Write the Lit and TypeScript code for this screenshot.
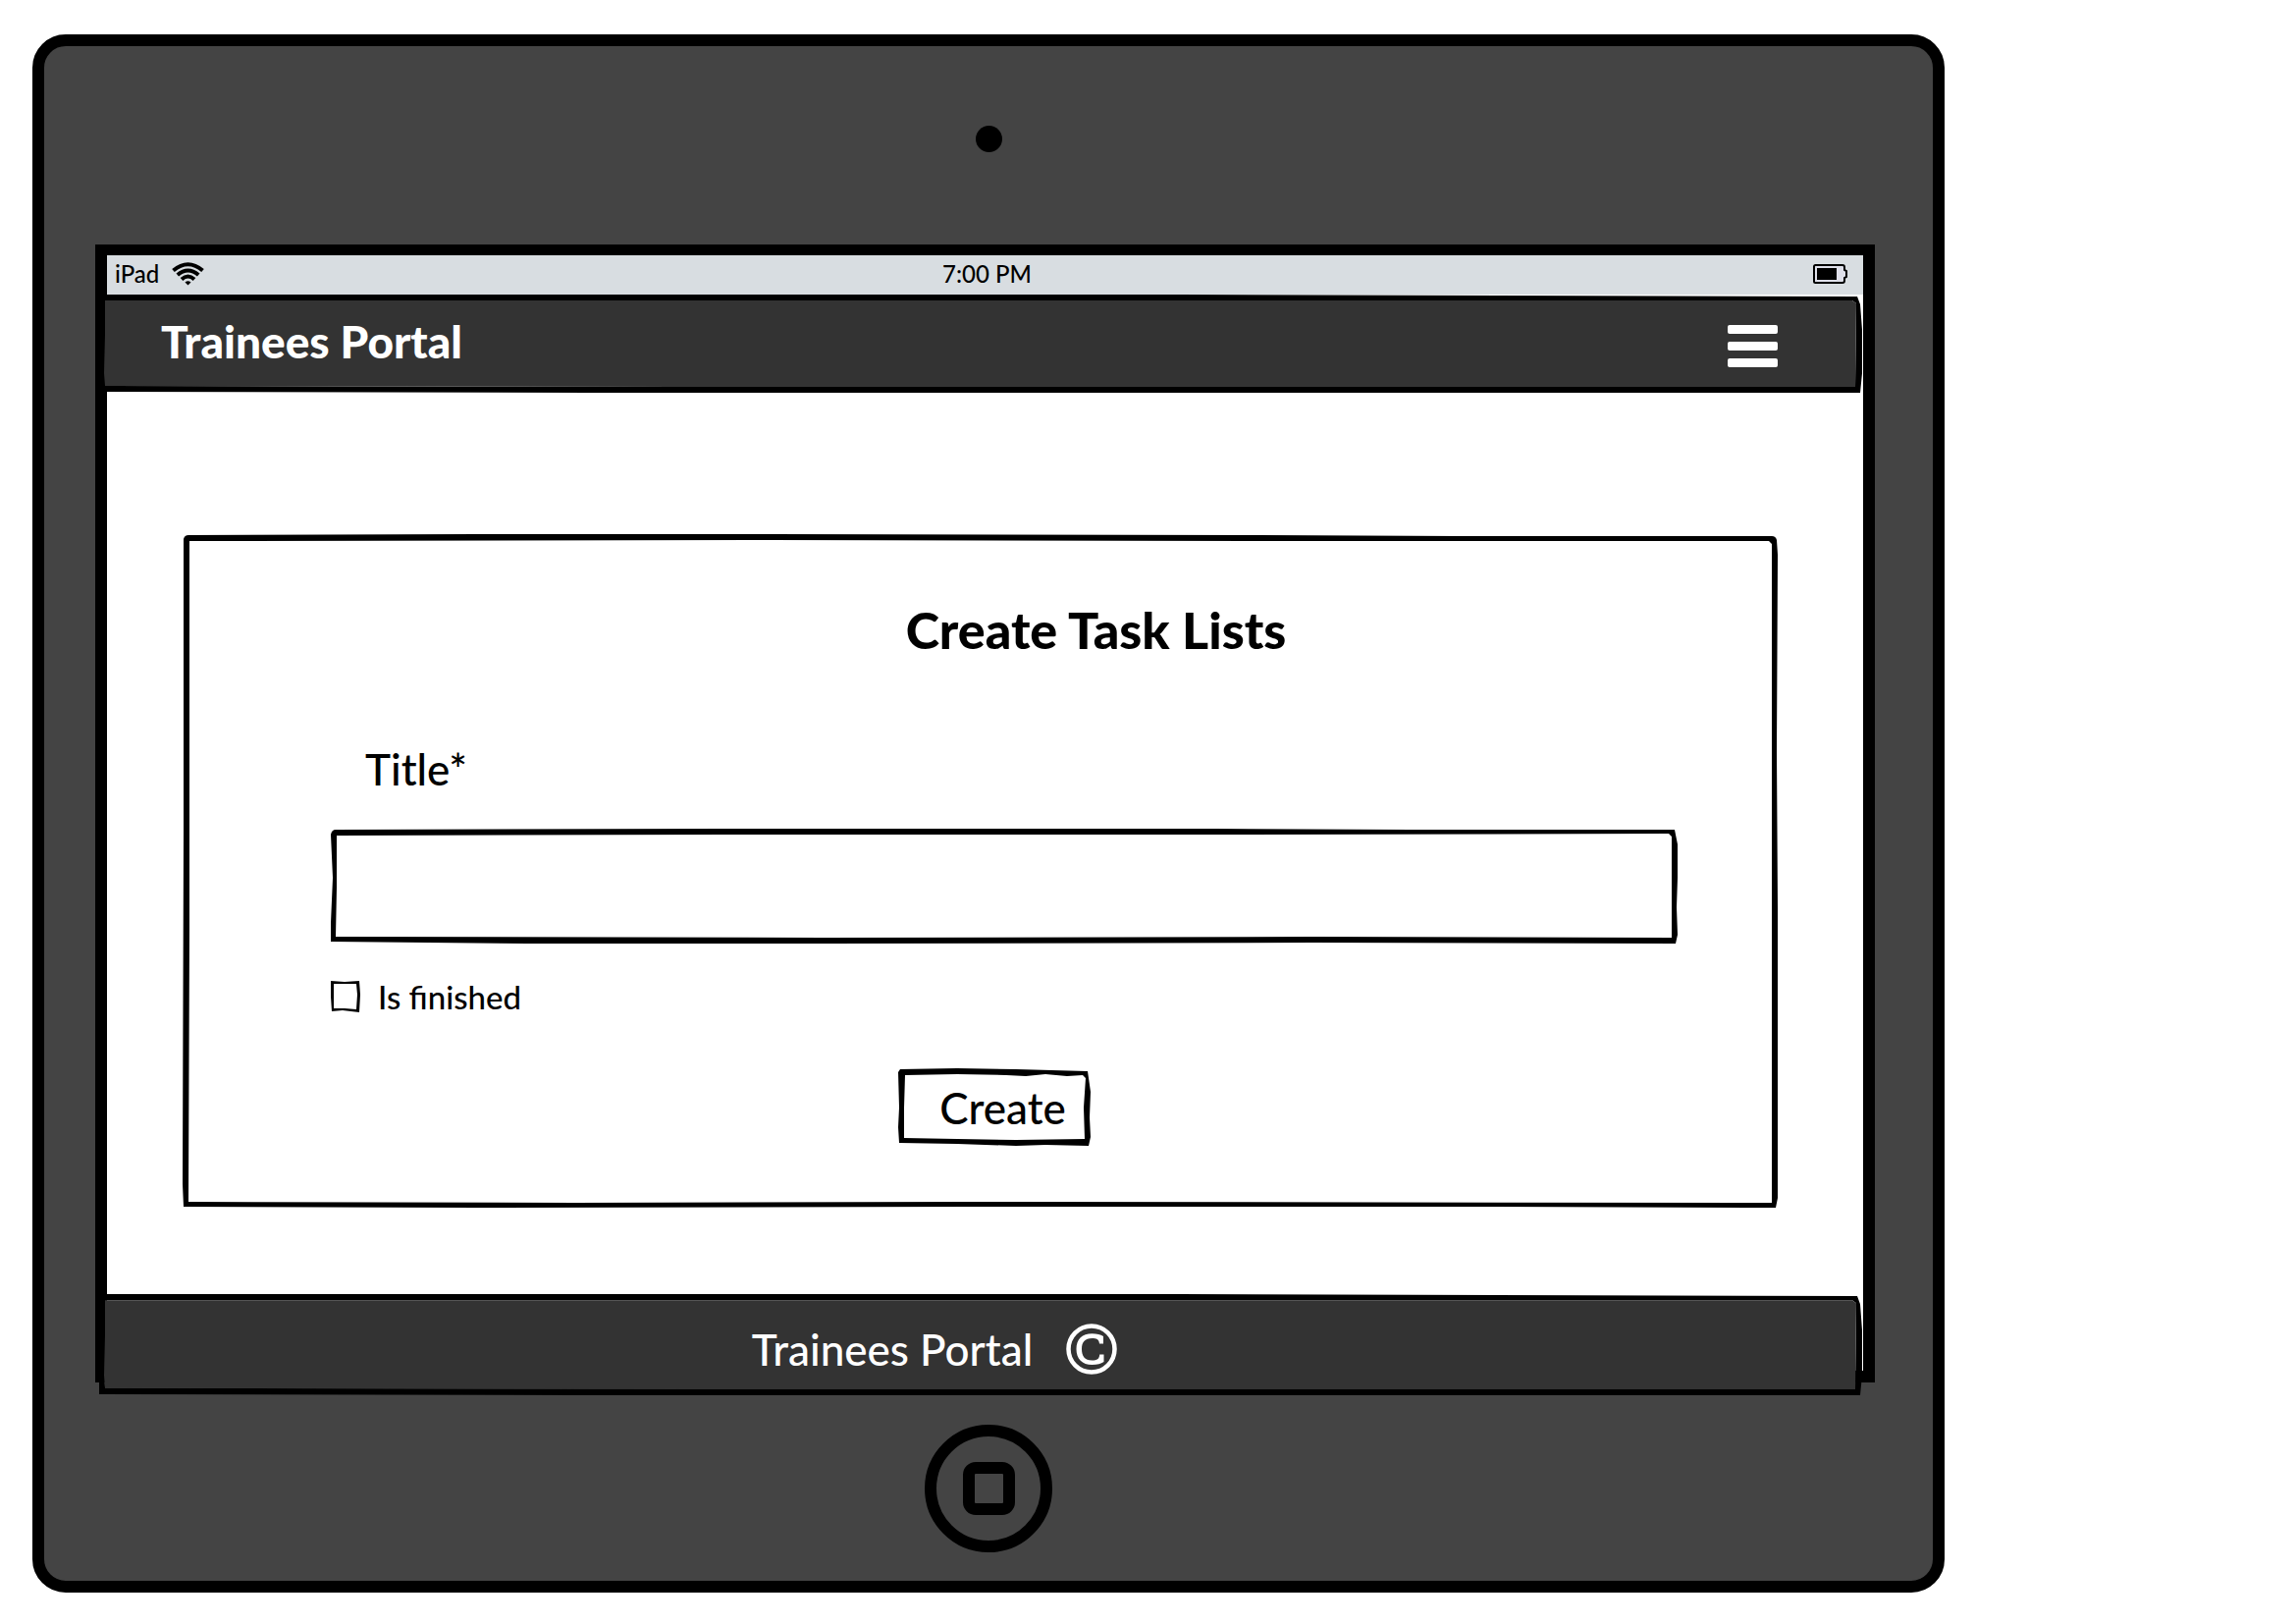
import { LitElement, html, css, svg } from "lit";
import { customElement, property } from "lit/decorators.js";

type Sketch = { w: number; h: number; outer: string; inner: string };

const SKETCHES: Record<string, Sketch> = {
  card: {
    w: 1625,
    h: 684,
    outer:
      "M1 4 Q2 0 6 0 L300 -1 L600 -1 L1100 0 L1300 1 L1619 1 Q1623 1 1624 5 L1625 20 L1624 220 L1625 380 L1625 674 L1623 684 L1300 683 L800 683 L300 684 L1 683 L0 660 L1 300 Z",
    inner:
      "M7 6 L600 5 L1100 6 L1616 6 L1619 9 L1619 300 L1619 400 L1619 679 L800 678 L400 679 L6 678 L7 400 Z",
  },
  field: {
    w: 1372,
    h: 117,
    outer:
      "M0 6 Q1 1 5 1 L400 0 L900 0 L1100 1 L1369 1 L1372 16 L1372 50 L1371 80 L1372 108 L1370 117 L1000 116 L500 117 L200 117 L0 115 L0 96 L2 50 Z",
    inner:
      "M6 7 L400 6 L900 6 L1363 5 L1366 8 L1366 111 L1000 110 L500 111 L5 110 L6 60 Z",
  },
  button: {
    w: 196,
    h: 79,
    outer:
      "M0 4 L2 1 L60 0 L120 1 L193 3 L196 24 L195 50 L196 70 L194 79 L150 78 L120 79 L60 77 L1 76 L0 60 L1 40 Z",
    inner:
      "M7 7 L60 6 L110 7 L130 8 L150 6 L172 8 L188 7 L191 10 L189 40 L190 72 L120 73 L60 72 L6 71 L6 40 Z",
  },
  box: {
    w: 30,
    h: 32,
    outer: "M0 0 L14 1 L29 0 L30 14 L29 32 L12 30 L1 31 L0 16 Z",
    inner: "M3 3 L14 3 L26 3 L27 14 L26 29 L14 28 L3 28 L3 14 Z",
  },
  bar: {
    w: 1796,
    h: 100,
    outer:
      "M0 4 L2 0 L500 0 L1100 0 L1791 2 L1794 10 L1796 36 L1796 80 L1794 100 L1786 100 L1200 100 L500 100 L0 99 Z",
    inner:
      "M6 6 L900 6 L1786 6 L1790 9 L1789 94 L1200 94 L600 94 L6 93 L5 80 L6 40 Z",
  },
};

@customElement("sketch-frame")
export class SketchFrame extends LitElement {
  @property() kind = "card";

  static styles = css`
    :host {
      position: absolute;
      inset: 0;
      display: block;
      pointer-events: none;
    }
    .drawing {
      display: block;
      width: 100%;
      height: 100%;
      overflow: visible;
    }
    .ink {
      fill: #000;
      fill-rule: evenodd;
    }
    .fill {
      fill: #333;
    }
  `;

  render() {
    const s = SKETCHES[this.kind];
    return html`<svg
      class="drawing"
      viewBox="0 0 ${s.w} ${s.h}"
      preserveAspectRatio="none"
      aria-hidden="true"
    >
      <path class="ink" d="${s.outer} ${s.inner}"></path>
      ${this.kind === "bar" ? svg`<path class="fill" d=${s.inner}></path>` : null}
    </svg>`;
  }
}

@customElement("app-root")
export class AppRoot extends LitElement {
  static styles = css`
    :host {
      display: block;
      background: #fff;
      color: #000;
      font-family: Lato, "Open Sans", sans-serif;
      font-weight: 500;
    }
    * {
      box-sizing: border-box;
    }
    .page {
      padding: 35px 358px 33px 33px;
    }
    .tablet {
      display: flex;
      flex-direction: column;
      background: #444;
      border: 12px solid #000;
      border-radius: 34px;
    }
    .camera {
      align-self: center;
      width: 27px;
      height: 27px;
      margin: 81px 0 94px;
      border-radius: 50%;
      background: #000;
    }
    .screen {
      margin: 0 59px 0 52px;
      border: 12px solid #000;
      border-top-width: 11px;
      background: #fff;
      display: flex;
      flex-direction: column;
    }
    .status {
      display: grid;
      grid-template-columns: 1fr auto 1fr;
      align-items: center;
      height: 40px;
      padding: 0 16px 2px 8px;
      background: #d8dde1;
      font-size: 24px;
      line-height: 32px;
    }
    .carrier {
      display: flex;
      align-items: center;
      gap: 13px;
    }
    .wifi {
      width: 33px;
      height: 24px;
    }
    .time {
      padding-left: 12px;
    }
    .battery {
      justify-self: end;
      width: 35px;
      height: 20px;
    }
    .bar {
      position: relative;
      display: flex;
      align-items: center;
      margin: 0 1px 0 -8px;
      color: #fff;
    }
    .bar > :not(sketch-frame) {
      position: relative;
    }
    .top {
      height: 100px;
      padding: 0 86px 0 63px;
      justify-content: space-between;
    }
    .brand {
      margin: 0;
      font-size: 46px;
      line-height: 60px;
      font-weight: 900;
      padding-bottom: 4px;
    }
    .menu {
      display: flex;
      flex-direction: column;
      gap: 8px;
      padding: 4px 0 0;
      border: 0;
      background: none;
      cursor: pointer;
    }
    .line {
      width: 51px;
      height: 9px;
      border-radius: 2px;
      background: #fff;
    }
    .card {
      position: relative;
      display: flex;
      flex-direction: column;
      margin: 145px 87px 88px 77px;
      padding: 66px 102px 63px 151px;
    }
    .heading {
      margin: 0 0 84px;
      padding-left: 187px;
      text-align: center;
      font-size: 52px;
      line-height: 60px;
      font-weight: 900;
    }
    .label {
      margin: 0 0 33px 35px;
      font-size: 44px;
      line-height: 56px;
    }
    .field {
      position: relative;
      display: flex;
      height: 117px;
    }
    .input {
      flex: 1;
      min-width: 0;
      padding: 0 24px;
      border: 0;
      background: none;
      font: inherit;
      font-size: 44px;
    }
    .check {
      display: flex;
      align-items: center;
      align-self: start;
      gap: 18px;
      height: 40px;
      margin: 34px 0 53px;
      font-size: 33px;
      line-height: 40px;
    }
    .box {
      position: relative;
      display: flex;
      width: 30px;
      height: 32px;
    }
    .tick {
      appearance: none;
      width: 100%;
      height: 100%;
      margin: 0;
    }
    .tick:checked {
      background: linear-gradient(#000, #000) center / 14px 14px no-repeat;
    }
    .create {
      position: relative;
      align-self: center;
      width: 196px;
      height: 79px;
      margin-right: 20px;
      padding: 0 0 0 17px;
      border: 0;
      background: none;
      color: inherit;
      font: inherit;
      font-size: 44px;
      line-height: 56px;
      cursor: pointer;
    }
    .bottom {
      height: 103px;
      margin-bottom: -25px;
      padding: 8px 94px 0 0;
      justify-content: center;
      gap: 34px;
      font-size: 44px;
      line-height: 56px;
    }
    .copyright {
      width: 52px;
      height: 52px;
    }
    .home {
      display: grid;
      place-items: center;
      align-self: center;
      width: 130px;
      height: 130px;
      margin: 43px 0 29px;
      padding: 0;
      border: 12px solid #000;
      border-radius: 50%;
      background: none;
      cursor: pointer;
    }
    .square {
      width: 53px;
      height: 54px;
      border: 12px solid #000;
      border-radius: 13px;
    }
  `;

  private create(event: Event) {
    event.preventDefault();
  }

  render() {
    return html`
      <div class="page">
        <div class="tablet">
          <div class="camera"></div>
          <div class="screen">
            <div class="status">
              <span class="carrier">
                iPad
                <svg class="wifi" viewBox="0 0 33 24" aria-hidden="true">
                  <g fill="none" stroke="#000" stroke-width="4">
                    <path d="M1.5 8.5 Q16.5 -4 31.5 8.5"></path>
                    <path d="M5.8 13 Q16.5 4 27.2 13"></path>
                    <path d="M10 17.5 Q16.5 11.5 23 17.5"></path>
                  </g>
                  <path d="M13.5 20.5 Q16.5 18 19.5 20.5 L16.5 23.5 Z"></path>
                </svg>
              </span>
              <span class="time">7:00 PM</span>
              <svg class="battery" viewBox="0 0 35 20" aria-hidden="true">
                <path
                  d="M2.5 1 H30 Q32 1 32 3 V6 L34 7 V13 L32 14 V17 Q32 19 30 19 H2.5 Q1 19 1 17.5 V2.5 Q1 1 2.5 1 Z"
                  fill="#dfe0ea"
                  stroke="#000"
                  stroke-width="2"
                ></path>
                <rect x="4" y="4" width="20" height="12"></rect>
              </svg>
            </div>
            <header class="bar top">
              <sketch-frame kind="bar"></sketch-frame>
              <h1 class="brand">Trainees Portal</h1>
              <button class="menu" type="button" aria-label="Menu">
                <span class="line"></span>
                <span class="line"></span>
                <span class="line"></span>
              </button>
            </header>
            <main>
              <form class="card" @submit=${this.create}>
                <sketch-frame kind="card"></sketch-frame>
                <h2 class="heading">Create Task Lists</h2>
                <label class="label" for="title">Title*</label>
                <div class="field">
                  <sketch-frame kind="field"></sketch-frame>
                  <input class="input" id="title" type="text" />
                </div>
                <label class="check" for="finished">
                  <span class="box">
                    <sketch-frame kind="box"></sketch-frame>
                    <input class="tick" id="finished" type="checkbox" />
                  </span>
                  Is finished
                </label>
                <button class="create" type="submit">
                  <sketch-frame kind="button"></sketch-frame>
                  Create
                </button>
              </form>
            </main>
            <footer class="bar bottom">
              <sketch-frame kind="bar"></sketch-frame>
              <span>Trainees Portal</span>
              <svg class="copyright" viewBox="0 0 52 52" aria-hidden="true">
                <circle cx="26" cy="26" r="23.5" fill="none" stroke="#fff" stroke-width="4.5"></circle>
                <path
                  d="M38 20.500 H34 C33.500 16 31 15 26.500 15 C19 15 16 19 16 26 C16 33 19 37.500 26.500 37.500 C31.500 37.500 34 36 34.200 31.500 H38.500 V39 C35.500 41 32 42 26.500 42 C16.500 42 10.500 36 10.500 26 C10.500 16 16.500 10.300 26.500 10.300 C31.500 10.300 35 11.300 38 13 Z"
                  fill="#fff"
                ></path>
              </svg>
            </footer>
          </div>
          <button class="home" type="button" aria-label="Home">
            <span class="square"></span>
          </button>
        </div>
      </div>
    `;
  }
}
